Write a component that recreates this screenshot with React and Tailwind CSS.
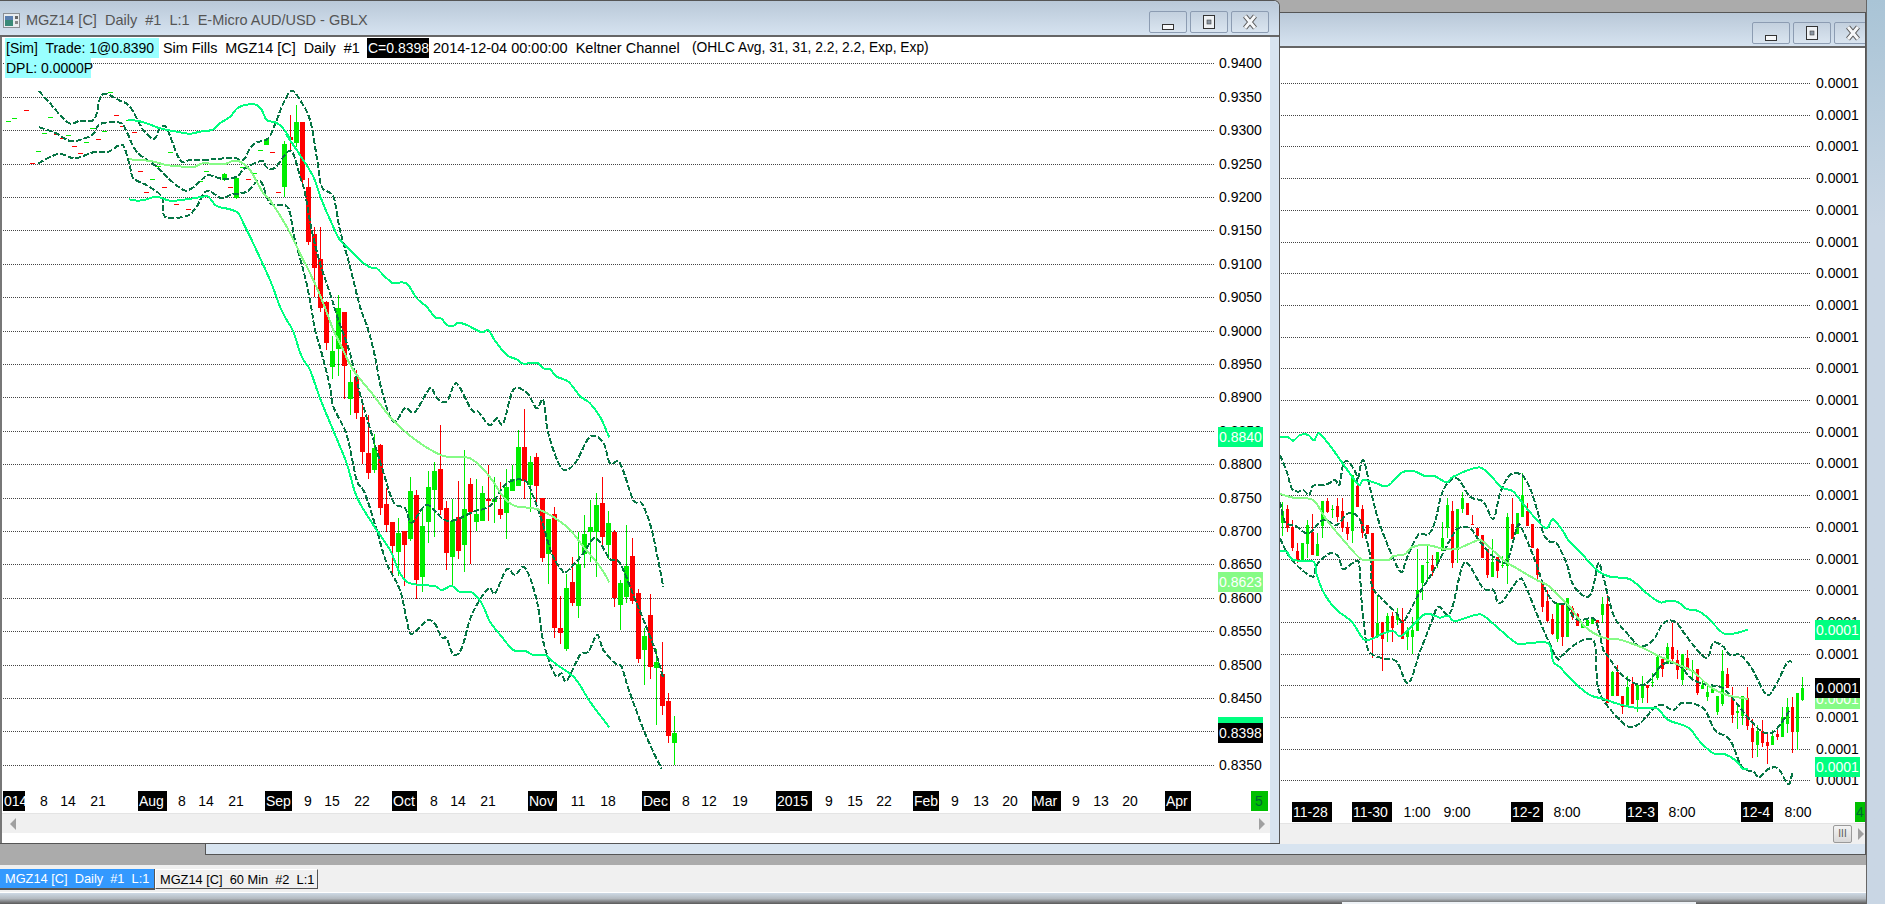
import React from "react";

const SPRING = "#00ff80";
const PALE = "#86fb86";
const DARK = "#067544";
const RED = "#ff0000";
const GREEN = "#00ee00";

// zoom-crop coordinates from tracing: [originX, originY, [x, y, x, y, ...]] at 3x
const toPoints = (parts) =>
    parts.flatMap(([ox, oy, arr]) => {
        const pts = [];
        for (let i = 0; i < arr.length; i += 2) pts.push([ox + arr[i] / 3, oy + arr[i + 1] / 3]);
        return pts;
    });

const smooth = (pts) => {
    let d = `M${pts[0][0].toFixed(1)} ${pts[0][1].toFixed(1)}`;
    for (let i = 0; i < pts.length - 1; i++) {
        const p0 = pts[i - 1] || pts[i];
        const p1 = pts[i];
        const p2 = pts[i + 1];
        const p3 = pts[i + 2] || p2;
        const c1x = p1[0] + (p2[0] - p0[0]) / 6;
        const c1y = p1[1] + (p2[1] - p0[1]) / 6;
        const c2x = p2[0] - (p3[0] - p1[0]) / 6;
        const c2y = p2[1] - (p3[1] - p1[1]) / 6;
        d += `C${c1x.toFixed(1)} ${c1y.toFixed(1)} ${c2x.toFixed(1)} ${c2y.toFixed(1)} ${p2[0].toFixed(1)} ${p2[1].toFixed(1)}`;
    }
    return d;
};

const Z8 = [0, 80];
const Z9 = [270, 80];
const Z5 = [250, 320];
const Z10 = [1280, 425];
const Z11 = [1560, 540];

const leftLines = [
    { c: DARK, dash: true, parts: [
        [...Z8, [117,33,150,70,205,128,240,122,283,118,300,55,318,42,360,62,390,80,430,150,462,176,480,145,500,145,540,240,570,241,640,238,700,233,730,240,750,205,770,187,805,175,830,120,850,70,875,32]],
        [...Z9, [90,60,120,120,140,230,155,320,190,350,210,450,240,560,270,680,295,750]],
        [...Z5, [375,110,395,210,430,305,465,265,495,275,540,205,560,235,590,245,610,200,625,195,665,270,685,275,718,315,740,295,760,310,790,210,830,218,860,265,880,240,895,340,935,445,975,430,1020,350,1060,368,1080,430,1110,430,1150,540,1175,550,1205,630,1240,800]],
    ] },
    { c: DARK, dash: true, parts: [
        [...Z8, [117,142,165,158,210,183,245,178,280,162,300,132,360,128,380,155,410,215,470,260,505,295,550,330,575,325,610,295,625,285,670,297,710,290,735,265,785,243,800,262,825,263,860,218,875,215]],
        [...Z9, [75,235,90,290,105,340,125,450,150,550,180,640,205,720]],
        [...Z5, [300,100,335,240,395,440,430,545,465,565,485,608,530,555,580,598,615,600,670,575,720,557,770,490,825,482,850,530,875,600,905,700,935,750,950,755,1000,700,1025,660,1045,660,1080,718,1110,730,1160,850,1210,975,1240,1075]],
    ] },
    { c: DARK, dash: true, parts: [
        [...Z8, [115,250,175,222,225,235,280,217,325,215,355,197,372,200,390,260,400,295,440,316,485,350,495,410,560,408,590,380,620,333,665,355,690,345,740,335,780,303,810,370,855,375]],
        [...Z9, [60,400,75,480,105,590,125,690,135,750]],
        [...Z5, [215,100,240,200,250,260,290,345,320,480,345,520,380,630,410,730,450,810,470,900,485,942,530,902,555,912,575,952,590,955,610,1003,635,985,665,885,715,805,735,820,770,748,795,765,825,743,860,840,880,965,915,1065,935,1060,950,1083,990,1005,1015,995,1042,945,1060,990,1095,1030,1115,1040,1135,1105,1185,1240,1235,1348]],
    ] },
    { c: SPRING, parts: [
        [...Z8, [385,120,410,122,440,130,480,145,530,155,570,161,600,155,638,149,660,130,690,110,712,85,735,75,768,74,785,90,800,120,825,127,845,140,870,175]],
        [...Z9, [50,165,90,225,130,290,155,360,185,430,210,480,240,510,275,545,300,562,320,565,345,590,370,610,395,607,415,615,440,655,470,680,495,712,515,716]],
        [...Z5, [590,15,610,17,625,8,650,15,695,37,715,30,735,62,770,105,800,118,820,131,860,128,880,145,900,148,920,170,955,185,990,228,1020,250,1050,290,1078,352]],
    ] },
    { c: SPRING, parts: [
        [...Z8, [387,358,415,362,440,358,470,350,510,362,560,358,610,350,625,350,650,378,690,388,715,400,735,440,755,480]],
        [...Z9, [0,600,30,680,50,720]],
        [...Z5, [110,0,130,35,155,110,180,150,210,235,245,320,290,430,320,530,370,615,420,690,445,750,470,785,510,795,555,798,575,810,605,798,630,816,665,817,695,850,720,905,755,950,790,990,825,993,850,1005,885,1005,915,1030,975,1075,1020,1145,1078,1222]],
    ] },
    { c: PALE, parts: [
        [...Z8, [387,238,450,243,500,255,550,260,585,260,610,250,670,253,700,242,720,245,750,270,790,340]],
        [...Z9, [0,360,50,440,90,520,130,600,160,670,190,750]],
        [...Z5, [270,70,310,150,370,225,420,290,490,355,580,408,660,415,715,465,760,530,795,558,870,570,950,620,1000,680,1050,740,1078,787]],
    ] },
];

const rightLines = [
    { c: DARK, dash: true, parts: [
        [...Z10, [0,90,20,140,35,190,55,200,70,195,88,210,100,182,140,178,165,165,178,180,190,118,205,110,228,145,232,170,250,105,275,210,300,300,340,400,365,442,380,400,415,330,445,328,465,290,490,195,530,160,570,215,610,230,640,282,660,205,690,150,725,150,750,190,770,250,790,325,810,350,830,355]],
        [...Z11, [20,70,35,125,60,160,85,170,100,140,115,70,130,110,145,170,165,235,210,290,240,320,280,300,310,250,345,245,380,290,425,345,445,350,460,308,490,320,510,345,540,345,575,385,620,465,650,430,680,370,697,365]],
    ] },
    { c: DARK, dash: true, parts: [
        [...Z10, [0,230,15,290,50,305,85,325,130,285,170,300,205,265,240,285,270,390,275,480,305,520,350,565,370,590,415,510,465,430,510,345,535,310,570,310,600,350,640,395,680,410,710,310,725,310,770,420,790,480,820,530,860,540,880,575]],
        [...Z11, [60,240,100,235,115,265,130,330,145,350,185,405,240,435,270,420,310,372,355,375,400,420,450,435,490,445,530,490,570,540,610,577,645,572,690,510]],
    ] },
    { c: DARK, dash: true, parts: [
        [...Z10, [0,340,25,390,60,430,100,455,110,420,150,385,175,395,190,432,225,410,238,420,245,530,260,660,280,690,310,700,350,710,385,775,420,680,455,590,475,545,510,565,545,430,565,418,610,490,640,495,660,535,715,465,735,480,780,590,820,680,835,703]],
        [...Z11, [0,352,50,310,85,298,105,315,112,430,130,480,170,530,205,560,240,550,295,495,340,510,370,488,430,505,465,570,510,600,545,680,580,695,597,712,625,687,655,686,685,733,697,697]],
    ] },
    { c: SPRING, parts: [
        [...Z10, [0,35,25,37,40,47,60,30,85,30,102,47,117,25,150,62,190,118,235,178,250,165,290,175,310,183,330,178,365,143,400,138,435,153,465,154,500,172,520,155,590,128,620,140,665,187,700,200,740,250,790,305,805,305,820,283,850,320]],
        [...Z11, [25,0,60,35,110,90,150,110,210,118,260,160,300,187,325,182,355,187,380,207,415,213,445,235,490,280,525,280,565,268]],
    ] },
    { c: SPRING, parts: [
        [...Z10, [0,378,20,380,40,405,100,410,110,450,135,510,170,555,215,590,250,642,275,642,310,625,340,618,365,632,430,570,465,572,480,578,505,572,525,588,585,570,610,572,650,605,710,655,745,655,805,655,820,710]],
        [...Z11, [0,382,45,430,90,465,130,477,185,495,240,505,290,505,325,540,385,563,420,605,460,640,495,643,525,660,550,687,565,685]],
    ] },
    { c: PALE, parts: [
        [...Z10, [0,207,40,218,80,220,105,230,140,285,190,345,240,400,270,405,325,405,340,393,375,388,395,367,440,360,490,371,530,372,590,347,610,350,670,405,710,430,770,465,805,482]],
        [...Z11, [0,172,30,200,75,260,130,293,175,298,240,320,290,345,350,372,400,395,450,440,500,465,565,477]],
    ] },
];

// k, color, wickTop, bodyTop, bodyBot, wickBot  (crop y at 3x)
const leftUpper = [
    [37,"g",279,282,300,303],[39,"g",294,294,355,358],[44,"g",178,178,195,195],[47,"g",183,192,320,352],
    [48,"r",105,170,180,215],[49,"g",75,126,188,200],[50,"r",126,126,300,310],[51,"r",294,321,485,495],
    [52,"r",440,462,564,650],[53,"r",440,537,683,695],
];

const leftLower = [
    ["r",-57,-54,68,90],["g",48,93,140,177],["g",-75,-36,87,167],["r",-24,-24,137,237],["g",150,186,237,285],
    ["r",150,170,279,297],["r",250,291,396,432],["r",285,399,459,477],["g",342,384,450,459],["r",372,375,564,585],
    ["r",505,552,615,636],["r",606,606,678,759],["g",594,639,696,768],["r",632,632,675,798],["g",471,513,657,663],
    ["r",510,525,780,837],["g",561,618,771,816],["g",453,501,606,669],["g",426,453,510,651],["r",315,447,570,585],
    ["r",543,564,699,750],["g",537,603,711,798],["r",483,591,693,717],["g",390,567,675,756],["r",474,492,576,732],
    ["g",477,582,606,633],["g",498,519,603,603],["r",435,537,543,603],["g",471,537,546,609],["r",486,567,585,597],
    ["g",447,501,579,657],["g",435,477,513,513],["g",330,381,498,498],["r",267,381,483,537],["g",408,426,495,576],
    ["r",399,411,498,555],["r",534,534,714,726],["g",597,597,702,792],["r",561,582,924,954],["r",828,924,939,972],
    ["g",762,804,987,993],["r",711,786,849,858],["g",636,732,858,894],["g",585,642,702,744],["g",540,621,636,726],
    ["g",519,555,636,771],["r",471,549,651,687],["g",573,609,675,717],["r",630,636,834,861],["g",780,789,855,930],
    ["g",615,738,831,849],["r",654,708,843,852],["r",807,819,1017,1029],["g",924,948,990,1095],["r",822,885,1041,1077],
    ["g",987,1026,1044,1215],["r",966,1062,1158,1185],["r",1119,1143,1248,1269],["g",1188,1239,1269,1335],
];

const leftDashes = [
    [5,"r",250],[4,"r",91],[9,"r",163],[10,"r",175],[12,"r",199],[13,"r",220],[16,"r",178],[19,"r",106],[20,"r",138],
    [22,"r",157],[23,"r",274],[24,"r",337],[27,"r",322],[29,"r",373],[31,"r",388],[38,"r",322],[41,"r",298],[45,"r",217],[46,"r",337],
    [1,"g",124],[2,"g",115],[6,"g",214],[7,"g",160],[8,"g",112],[11,"g",166],[14,"g",187],[15,"g",145],[17,"g",154],[18,"g",37],
    [21,"g",121],[25,"g",298],[26,"g",259],[28,"g",217],[33,"g",304],[34,"g",274],[40,"g",262],[42,"g",280],[43,"g",211],
];

const rightA = [
    ["g",230,258,293,333],["r",240,252,308,320],["r",285,305,370,377],["r",355,378,408,413],["g",354,354,408,408],
    ["g",285,300,357,400],["r",267,320,390,390],["g",323,357,393,393],["g",228,228,303,338],["r",220,228,262,265],
    ["g",240,253,256,280],["r",220,243,277,290],["r",220,258,308,320],["r",290,306,327,345],["g",150,150,318,353],
    ["r",178,182,246,246],["r",240,252,323,340],["r",300,300,327,327],["r",324,324,636,698],["g",510,594,636,640],
    ["r",591,591,642,738],["g",565,573,624,650],["r",560,573,610,652],["g",550,566,585,600],["r",548,585,642,642],
    ["g",605,615,636,675],["g",576,615,636,687],["g",372,495,618,618],["g",420,420,474,525],["g",357,411,415,470],
    ["r",390,420,438,452],["g",381,381,417,428],["g",291,339,378,378],["g",220,240,309,340],["r",228,258,414,428],
    ["g",252,252,375,414],["g",202,219,253,265],["r",234,234,270,270],["r",270,298,300,300],["r",309,309,333,333],
    ["r",330,330,399,399],["r",372,372,450,458],["g",342,411,456,456],["r",396,396,438,458],["g",392,420,423,430],
    ["g",264,276,423,477],["r",220,297,342,342],["g",264,264,327,327],["g",145,210,276,276],["r",235,258,303,303],
    ["r",297,297,368,368],["r",368,372,450,465],["r",471,471,546,560],["r",495,528,588,590],["r",568,582,628,630],
    ["g",535,535,642,650],["r",535,535,636,662],["g",520,520,636,636],["r",544,550,576,585],["r",565,568,603,603],
];

const rightB = [
    ["g",253,253,263,263],["g",240,240,258,258],["g",235,235,252,252],["r",240,240,250,270],["g",170,192,225,250],
    ["r",165,192,490,490],["g",393,397,468,468],["r",375,397,468,468],["r",468,468,500,522],["g",408,441,500,500],
    ["r",410,432,492,492],["g",436,436,480,515],["g",408,435,475,490],["r",435,435,444,490],["g",400,427,430,442],
    ["g",342,352,413,420],["r",357,357,387,410],["g",310,320,372,372],["r",250,321,357,365],["r",330,360,390,418],
    ["g",342,342,420,436],["r",330,354,390,390],["g",360,390,393,420],["r",387,387,459,465],["g",417,435,447,447],
    ["g",437,456,471,483],["g",434,444,459,459],["g",468,468,515,525],["g",330,393,492,497],["r",383,402,444,444],
    ["r",442,474,525,548],["g",490,513,518,568],["g",468,468,528,555],["r",442,475,558,570],["r",536,564,606,654],
    ["g",555,573,615,650],["r",540,573,609,622],["r",575,606,618,672],["g",570,588,615,615],["r",565,582,591,600],
    ["g",500,531,591,591],["g",474,501,552,580],["r",470,501,576,639],["g",459,459,576,630],["g",411,444,480,483],
];

const Candle = ({ x, w, col, wt, bt, bb, wb, oy }) => {
    const fill = col === "r" ? RED : GREEN;
    const wickX = x + Math.floor(w / 2);
    return (
        <g>
            <rect x={wickX} y={oy + wt / 3} width={1} height={(wb - wt) / 3} fill={fill} />
            <rect x={x} y={oy + bt / 3} width={w} height={Math.max(1, (bb - bt) / 3)} fill={fill} />
        </g>
    );
};

const Lines = ({ lines }) =>
    lines.map((l, i) => (
        <path
            key={i}
            d={smooth(toPoints(l.parts))}
            fill="none"
            stroke={l.c}
            strokeWidth={2}
            strokeDasharray={l.dash ? "6 2" : undefined}
            shapeRendering="crispEdges"
        />
    ));

const AxisTag = ({ x, y, w, text, bg, color = "white", h = 20 }) => (
    <g>
        <rect x={x} y={y} width={w} height={h} fill={bg} shapeRendering="crispEdges" />
        {text && (
            <text x={x + 1} y={y + 15} fontSize={14} fill={color}>
                {text}
            </text>
        )}
    </g>
);

const TimeText = ({ x, y, text }) => (
    <text x={x} y={y} fontSize={14} fill="#000" textAnchor="middle">
        {text}
    </text>
);

const leftPrices = Array.from({ length: 22 }, (_, i) => ({
    y: Math.round(63.4 + i * 33.4),
    label: (0.94 - i * 0.005).toFixed(4),
}));
const rightGrid = Array.from({ length: 23 }, (_, i) => Math.round(83 + i * 31.7));

const leftTimeTags = [
    [3, 22, "014"], [138, 29, "Aug"], [265, 27, "Sep"], [392, 25, "Oct"], [528, 29, "Nov"], [642, 28, "Dec"],
    [776, 36, "2015"], [913, 26, "Feb"], [1032, 29, "Mar"], [1165, 26, "Apr"],
];
const leftTimeText = [
    [44,"8"],[68,"14"],[98,"21"],[182,"8"],[206,"14"],[236,"21"],[308,"9"],[332,"15"],[362,"22"],[434,"8"],[458,"14"],[488,"21"],
    [578,"11"],[608,"18"],[686,"8"],[709,"12"],[740,"19"],[829,"9"],[855,"15"],[884,"22"],[955,"9"],[981,"13"],[1010,"20"],
    [1076,"9"],[1101,"13"],[1130,"20"],
];
const rightTimeTags = [[1292, 40, "11-28"], [1352, 40, "11-30"], [1511, 32, "12-2"], [1626, 32, "12-3"], [1741, 32, "12-4"]];
const rightTimeText = [[1417, "1:00"], [1457, "9:00"], [1567, "8:00"], [1682, "8:00"], [1798, "8:00"]];

function LeftChart() {
    return (
        <svg viewBox="2 37 1268 776" width="1268" height="776" className="block">
            {leftPrices.map((p) => (
                <g key={p.label}>
                    <line x1={3} x2={1214} y1={p.y + 0.5} y2={p.y + 0.5} stroke="#444" strokeDasharray="1 1" shapeRendering="crispEdges" />
                    <text x={1219} y={p.y + 5} fontSize={14} fill="#000">{p.label}</text>
                </g>
            ))}
            <g shapeRendering="crispEdges">
                {leftDashes.map(([k, col, y]) => (
                    <rect key={`${k}${col}`} x={6 * k} y={80 + y / 3} width={5} height={1} fill={col === "r" ? RED : GREEN} />
                ))}
                {leftUpper.map(([k, col, wt, bt, bb, wb]) => (
                    <Candle key={k} x={6 * k} w={5} col={col} wt={wt} bt={bt} bb={bb} wb={wb} oy={80} />
                ))}
                {leftLower.map(([col, wt, bt, bb, wb], i) => (
                    <Candle key={i} x={6 * (54 + i)} w={5} col={col} wt={wt} bt={bt} bb={bb} wb={wb} oy={320} />
                ))}
            </g>
            <Lines lines={leftLines} />
            <AxisTag x={1218} y={427} w={45} text="0.8840" bg={SPRING} />
            <AxisTag x={1218} y={572} w={45} text="0.8623" bg={PALE} />
            <AxisTag x={1218} y={717} w={45} bg={SPRING} />
            <AxisTag x={1218} y={723} w={45} text="0.8398" bg="#000" />
            {leftTimeTags.map(([x, w, t]) => (
                <AxisTag key={t} x={x} y={791} w={w} text={t} bg="#000" />
            ))}
            {leftTimeText.map(([x, t]) => (
                <TimeText key={x} x={x} y={806} text={t} />
            ))}
            <AxisTag x={1251} y={791} w={17} bg="#00c000" />
            <text x={1255} y={806} fontSize={14} fill="#063">5</text>
        </svg>
    );
}

function RightChart() {
    return (
        <svg viewBox="206 48 1659 775" width="1659" height="775" className="block">
            {rightGrid.map((y) => (
                <g key={y}>
                    <line x1={1281} x2={1810} y1={y + 0.5} y2={y + 0.5} stroke="#444" strokeDasharray="1 1" shapeRendering="crispEdges" />
                    <text x={1816} y={y + 5} fontSize={14} fill="#000">0.0001</text>
                </g>
            ))}
            <g shapeRendering="crispEdges">
                {rightA.map(([col, wt, bt, bb, wb], i) => (
                    <Candle key={i} x={1281 + 5 * i} w={3} col={col} wt={wt} bt={bt} bb={bb} wb={wb} oy={425} />
                ))}
                {rightB.map(([col, wt, bt, bb, wb], i) => (
                    <Candle key={i} x={1581 + 5 * i} w={3} col={col} wt={wt} bt={bt} bb={bb} wb={wb} oy={540} />
                ))}
            </g>
            <Lines lines={rightLines} />
            <AxisTag x={1815} y={620} w={45} text="0.0001" bg={SPRING} />
            <AxisTag x={1815} y={689} w={45} text="0.0001" bg={PALE} />
            <AxisTag x={1815} y={678} w={45} text="0.0001" bg="#000" />
            <AxisTag x={1815} y={757} w={45} text="0.0001" bg={SPRING} />
            {rightTimeTags.map(([x, w, t]) => (
                <AxisTag key={t} x={x} y={802} w={w} text={t} bg="#000" />
            ))}
            {rightTimeText.map(([x, t]) => (
                <TimeText key={x} x={x} y={817} text={t} />
            ))}
            <AxisTag x={1855} y={802} w={10} bg="#00c000" />
            <text x={1856} y={817} fontSize={14} fill="#063">4</text>
        </svg>
    );
}

function WinButton({ children }) {
    return (
        <div className="flex h-[22px] w-[38px] shrink-0 items-center justify-center rounded-[2px] border border-[#8c9cb2] bg-gradient-to-b from-[#c3d0de] to-[#dae5f0]">
            {children}
        </div>
    );
}

function WindowButtons() {
    return (
        <div className="flex gap-[3px]">
            <WinButton>
                <svg width="14" height="14" viewBox="0 0 14 14" className="mt-[3px]">
                    <rect x="1.5" y="7.5" width="11" height="5" fill="#f4f6f8" stroke="#333" />
                </svg>
            </WinButton>
            <WinButton>
                <svg width="14" height="16" viewBox="0 0 14 16">
                    <rect x="1.5" y="1.5" width="11" height="13" fill="#eef1f4" stroke="#333" />
                    <rect x="5" y="6" width="4" height="4" fill="#8a96a3" stroke="#444" strokeWidth="0.6" />
                </svg>
            </WinButton>
            <WinButton>
                <svg width="16" height="16" viewBox="0 0 16 16">
                    <path d="M3 2 L13 14 M13 2 L3 14" stroke="#555" strokeWidth="5" fill="none" />
                    <path d="M3 2 L13 14 M13 2 L3 14" stroke="#f5f7f9" strokeWidth="3" fill="none" />
                </svg>
            </WinButton>
        </div>
    );
}

function ScrollLeftArrow() {
    return <div className="h-0 w-0 border-y-[6px] border-r-[6px] border-y-transparent border-r-[#a0a0a0]" />;
}
function ScrollRightArrow() {
    return <div className="h-0 w-0 border-y-[6px] border-l-[6px] border-y-transparent border-l-[#a0a0a0]" />;
}

function ChartLegend() {
    return (
        <div className="absolute left-[3px] top-[1px] flex flex-col items-start whitespace-pre text-[14px] leading-[20px] text-black">
            <div className="flex h-[20px]">
                <span className="w-[154px] bg-[#99ffff] pl-[1px]">[Sim]  Trade: 1@0.8390</span>
                <span className="ml-[4px] w-[204px] text-[14.4px]">Sim Fills  MGZ14 [C]  Daily  #1</span>
                <span className="w-[62px] overflow-hidden bg-black pl-[1px] text-white">C=0.8398</span>
                <span className="ml-[4px] w-[259px] text-[14.5px]">2014-12-04 00:00:00  Keltner Channel</span>
                <span className="text-[13.8px]">(OHLC Avg, 31, 31, 2.2, 2.2, Exp, Exp)</span>
            </div>
            <div className="h-[20px] w-[86px] bg-[#99ffff] pl-[1px]">DPL: 0.0000P</div>
        </div>
    );
}

export default function App() {
    return (
        <div className="flex h-[904px] w-[1885px] overflow-hidden bg-[#c9d6e4] [font-family:'Liberation_Sans',sans-serif]">
            <div className="flex w-[1866px] shrink-0 flex-col">
                <div className="relative h-[865px] shrink-0 bg-[#ababab]">
                    {/* second chart window, mostly behind the first */}
                    <div className="absolute left-[205px] top-[12px] flex h-[843px] w-[1661px] flex-col overflow-hidden border border-[#555] bg-[#d8e4f0]">
                        <div className="flex h-[35px] shrink-0 items-start justify-end border-b-2 border-[#666] bg-gradient-to-b from-[#b9c8d8] to-[#d6e3f0] pt-[9px]">
                            <div className="mr-[-7px]">
                                <WindowButtons />
                            </div>
                        </div>
                        <div className="flex h-[796px] shrink-0 flex-col bg-white">
                            <RightChart />
                            <div className="flex h-[21px] items-center justify-end border-t border-[#e4e4e4] bg-[#f0f0f0] pr-[1px]">
                                <div className="mr-[6px] flex h-[18px] w-[19px] items-center justify-center rounded-[2px] border border-[#9a9a9a] bg-gradient-to-b from-[#f4f4f4] to-[#d8d8d8] text-[10px] leading-none text-[#555]">
                                    III
                                </div>
                                <ScrollRightArrow />
                            </div>
                        </div>
                    </div>

                    {/* active chart window */}
                    <div className="absolute left-0 top-0 flex h-[844px] w-[1280px] flex-col rounded-tr-[6px] border-y border-r border-[#555] bg-[#d8e4f0]">
                        <div className="flex h-[36px] shrink-0 items-start justify-between rounded-tr-[6px] border-b-2 border-[#666] bg-gradient-to-b from-[#b9c8d8] to-[#d6e3f0] pr-[10px] pt-[10px]">
                            <div className="flex items-center pl-[3px]">
                                <svg width="18" height="16" viewBox="0 0 18 16">
                                    <rect x="0.5" y="1.5" width="16" height="14" fill="#e8ecef" stroke="#8a8f94" />
                                    <rect x="2" y="4" width="8" height="10" fill="#3a8a78" />
                                    <rect x="2" y="4" width="8" height="4" fill="#5a7fb0" />
                                    <rect x="12" y="4" width="3" height="3" fill="#666" />
                                    <rect x="12" y="9" width="3" height="3" fill="#888" />
                                </svg>
                                <span className="ml-[5px] whitespace-pre text-[14.5px] leading-[18px] text-[#555]">
                                    MGZ14 [C]  Daily  #1  L:1  E-Micro AUD/USD - GBLX
                                </span>
                            </div>
                            <WindowButtons />
                        </div>
                        <div className="flex min-h-0 flex-1 border-l-2 border-[#777]">
                            <div className="flex w-[1268px] shrink-0 flex-col bg-white">
                                <div className="relative h-[776px] shrink-0">
                                    <LeftChart />
                                    <ChartLegend />
                                </div>
                                <div className="flex h-[20px] items-center justify-between border-t border-[#e4e4e4] bg-[#f0f0f0] pl-[8px] pr-[5px]">
                                    <ScrollLeftArrow />
                                    <ScrollRightArrow />
                                </div>
                            </div>
                        </div>
                    </div>
                </div>

                <div className="flex h-[27px] shrink-0 items-start whitespace-pre bg-[#f0f0f0] pt-[4px] text-[12.8px] leading-[19px]">
                    <div className="h-[21px] w-[155px] border-b-2 border-r border-[#555] bg-[#3399ff] pl-[5px] text-white">
                        MGZ14 [C]  Daily  #1  L:1
                    </div>
                    <div className="h-[20px] w-[163px] border-b border-l border-r border-t border-b-[#555] border-l-white border-r-[#555] border-t-white pl-[4px] text-black">
                        MGZ14 [C]  60 Min  #2  L:1
                    </div>
                </div>
                <div className="h-[1px] shrink-0 bg-white" />
                <div className="relative h-[11px] shrink-0 bg-gradient-to-b from-[#cdd9e5] via-[#b4bac0] to-[#5a5a5a]">
                    <div className="absolute bottom-0 left-[1342px] h-[2px] w-[354px] bg-[#eef2f6]" />
                </div>
            </div>
            <div className="flex flex-1">
                <div className="w-[1px] bg-[#666]" />
                <div className="w-[18px] bg-gradient-to-b from-[#a9c4d6] to-[#c9d6e4] to-[25%]" />
            </div>
        </div>
    );
}
